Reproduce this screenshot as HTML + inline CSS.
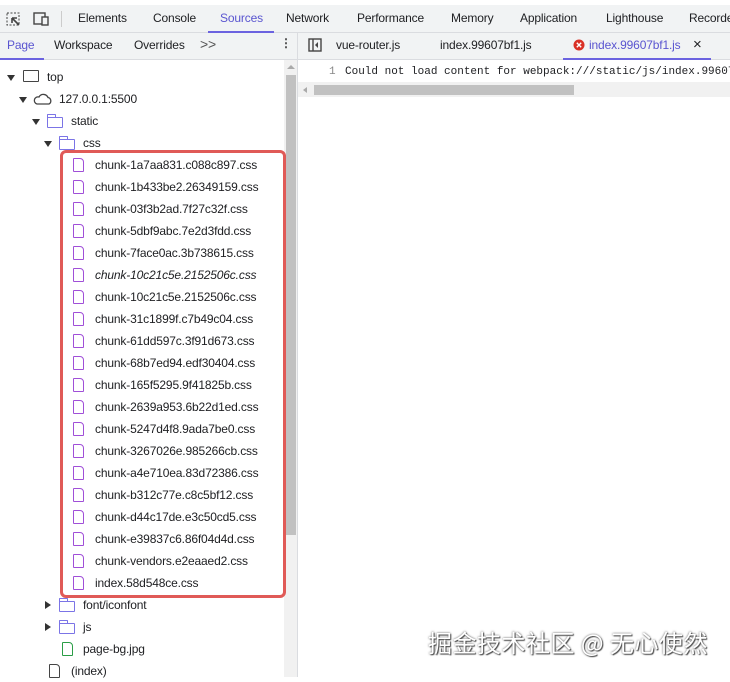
<!DOCTYPE html>
<html><head><meta charset="utf-8"><style>
*{margin:0;padding:0;box-sizing:border-box}
body{width:730px;height:677px;overflow:hidden;background:#fff;font-family:"Liberation Sans","Noto Sans CJK SC",sans-serif;font-size:12px;letter-spacing:-0.15px;color:#202124;position:relative}
.bar1{position:absolute;left:0;top:5px;width:730px;height:28px;background:#f1f3f4;border-bottom:1px solid #dadce0}
.bar2{position:absolute;left:0;top:33px;width:730px;height:27px;background:#f1f3f4;border-bottom:1px solid #dadce0}
.t{position:absolute;white-space:nowrap}
.sel{color:#5a55d0}
.ul{position:absolute;height:2px;background:#6b63e0}
.row{position:absolute;white-space:nowrap;height:22px;line-height:22px}
.tri{position:absolute;width:0;height:0;border-left:4px solid transparent;border-right:4px solid transparent;border-top:6px solid #333}
.trir{position:absolute;width:0;height:0;border-top:4px solid transparent;border-bottom:4px solid transparent;border-left:6px solid #333}
.fold{position:absolute;width:16px;height:11px;border:1.5px solid #7b74e6;border-radius:1px}
.fold:before{content:"";position:absolute;left:-1.5px;top:-4px;width:7px;height:3px;border:1.5px solid #7b74e6;border-bottom:none;border-radius:1px 1px 0 0}
.file{position:absolute;width:11px;height:14px;border:1.6px solid #a04fd8;border-radius:1px 4px 1px 1px}
</style></head><body>
<div class="bar1">
<svg style="position:absolute;left:6px;top:7px" width="16" height="14"><rect x="1" y="1" width="12" height="12" fill="none" stroke="#444" stroke-dasharray="2 1.5"/><path d="M6 6 L13 13 M6 6 L6 11 M6 6 L11 6" stroke="#444" stroke-width="1.6" fill="none"/></svg>
<svg style="position:absolute;left:33px;top:7px" width="17" height="14"><rect x="1" y="1" width="11" height="11" fill="none" stroke="#444" stroke-width="1.4"/><rect x="9" y="5" width="6" height="8" fill="#f1f3f4" stroke="#444" stroke-width="1.4"/></svg>
<div style="position:absolute;left:61px;top:6px;width:1px;height:16px;background:#ccc"></div>
<span class="t" style="left:78px;top:6px">Elements</span>
<span class="t" style="left:153px;top:6px">Console</span>
<span class="t sel" style="left:220px;top:6px">Sources</span>
<div class="ul" style="left:208px;top:26px;width:66px"></div>
<span class="t" style="left:286px;top:6px">Network</span>
<span class="t" style="left:357px;top:6px">Performance</span>
<span class="t" style="left:451px;top:6px">Memory</span>
<span class="t" style="left:520px;top:6px">Application</span>
<span class="t" style="left:606px;top:6px">Lighthouse</span>
<span class="t" style="left:689px;top:6px">Recorder</span>
</div>
<div class="bar2">
<span class="t sel" style="left:7px;top:5px">Page</span>
<div class="ul" style="left:0;top:25px;width:44px"></div>
<span class="t" style="left:54px;top:5px">Workspace</span>
<span class="t" style="left:134px;top:5px">Overrides</span>
<span class="t" style="left:200px;top:3px;font-size:14px;color:#555">&gt;&gt;</span>
<span class="t" style="left:280px;top:3px;font-weight:bold;color:#444">&#8942;</span>
<div style="position:absolute;left:297px;top:0;width:1px;height:27px;background:#dadce0"></div>
<svg style="position:absolute;left:308px;top:5px" width="14" height="14"><rect x="1" y="1" width="12" height="12" fill="none" stroke="#444" stroke-width="1.4"/><line x1="5" y1="1" x2="5" y2="13" stroke="#444" stroke-width="1.4"/><path d="M10 4 L7 7 L10 10Z" fill="#444"/></svg>
<span class="t" style="left:336px;top:5px">vue-router.js</span>
<span class="t" style="left:440px;top:5px">index.99607bf1.js</span>
<svg style="position:absolute;left:573px;top:6px" width="12" height="12"><circle cx="6" cy="6" r="5.5" fill="#d93025"/><path d="M3.8 3.8 L8.2 8.2 M8.2 3.8 L3.8 8.2" stroke="#fff" stroke-width="1.4"/></svg>
<span class="t sel" style="left:589px;top:5px">index.99607bf1.js</span>
<span class="t" style="left:693px;top:3px;font-size:15px">×</span>
<div class="ul" style="left:563px;top:25px;width:148px"></div>
</div>
<div style="position:absolute;left:284px;top:60px;width:13px;height:617px;background:#f1f1f1"></div>
<div style="position:absolute;left:286px;top:75px;width:10px;height:460px;background:#c1c1c1"></div>
<div style="position:absolute;left:287px;top:65px;width:0;height:0;border-left:4px solid transparent;border-right:4px solid transparent;border-bottom:4px solid #aaa"></div>
<div style="position:absolute;left:297px;top:60px;width:1px;height:617px;background:#dadce0"></div>
<span class="t" style="left:329px;top:66px;font-family:'Liberation Mono',monospace;font-size:11px;letter-spacing:0;color:#888">1</span>
<span class="t" style="left:345px;top:66px;font-family:'Liberation Mono',monospace;font-size:11px;letter-spacing:0">Could not load content for webpack:///static/js/index.99607</span>
<div style="position:absolute;left:298px;top:82px;width:432px;height:15px;background:#f1f1f1"></div>
<div style="position:absolute;left:314px;top:85px;width:260px;height:10px;background:#c1c1c1"></div>
<div style="position:absolute;left:303px;top:87px;width:0;height:0;border-top:3px solid transparent;border-bottom:3px solid transparent;border-right:4px solid #aaa"></div>
<div class="tri" style="left:7px;top:75px"></div>
<div style="position:absolute;left:23px;top:70px;width:16px;height:12px;border:1.5px solid #444;border-radius:1px"></div>
<div class="row" style="left:47px;top:66px">top</div>
<div class="tri" style="left:19px;top:97px"></div>
<svg style="position:absolute;left:33px;top:92px" width="20" height="14"><path d="M4 12 H16 A3.5 3.5 0 0 0 15 5.5 A5 5 0 0 0 6 5 A3.5 3.5 0 0 0 4 12Z" fill="none" stroke="#444" stroke-width="1.3"/></svg>
<div class="row" style="left:59px;top:88px">127.0.0.1:5500</div>
<div class="tri" style="left:32px;top:119px"></div>
<div class="fold" style="left:47px;top:117px"></div>
<div class="row" style="left:71px;top:110px">static</div>
<div class="tri" style="left:44px;top:141px"></div>
<div class="fold" style="left:59px;top:139px"></div>
<div class="row" style="left:83px;top:132px">css</div>
<div style="position:absolute;left:60px;top:150px;width:226px;height:448px;border:3px solid #e05a57;border-radius:6px"></div>
<div id="files"></div>
<div class="trir" style="left:45px;top:601px"></div>
<div class="fold" style="left:59px;top:601px"></div>
<div class="row" style="left:83px;top:594px">font/iconfont</div>
<div class="trir" style="left:45px;top:623px"></div>
<div class="fold" style="left:59px;top:623px"></div>
<div class="row" style="left:83px;top:616px">js</div>
<div class="file" style="left:62px;top:642px;border-color:#2a9d46"></div>
<div class="row" style="left:83px;top:638px">page-bg.jpg</div>
<div class="file" style="left:49px;top:664px;border-color:#444"></div>
<div class="row" style="left:71px;top:660px">(index)</div>
<div class="t" style="left:428px;top:624px;font-size:24px;letter-spacing:0.5px;color:#fff;text-shadow:0 0 2px #555,1px 1px 1px #444;font-family:'Noto Sans CJK SC',sans-serif">掘金技术社区 @ 无心使然</div>
<script>
var n=["chunk-1a7aa831.c088c897.css","chunk-1b433be2.26349159.css","chunk-03f3b2ad.7f27c32f.css","chunk-5dbf9abc.7e2d3fdd.css","chunk-7face0ac.3b738615.css","chunk-10c21c5e.2152506c.css","chunk-10c21c5e.2152506c.css","chunk-31c1899f.c7b49c04.css","chunk-61dd597c.3f91d673.css","chunk-68b7ed94.edf30404.css","chunk-165f5295.9f41825b.css","chunk-2639a953.6b22d1ed.css","chunk-5247d4f8.9ada7be0.css","chunk-3267026e.985266cb.css","chunk-a4e710ea.83d72386.css","chunk-b312c77e.c8c5bf12.css","chunk-d44c17de.e3c50cd5.css","chunk-e39837c6.86f04d4d.css","chunk-vendors.e2eaaed2.css","index.58d548ce.css"];
var h="";n.forEach(function(s,i){var y=154+i*22;h+='<div class="file" style="left:73px;top:'+(y+4)+'px"></div><div class="row" style="left:95px;top:'+y+'px;'+(i==5?'font-style:italic':'')+'">'+s+'</div>';});
document.getElementById("files").innerHTML=h;
</script>
</body></html>
